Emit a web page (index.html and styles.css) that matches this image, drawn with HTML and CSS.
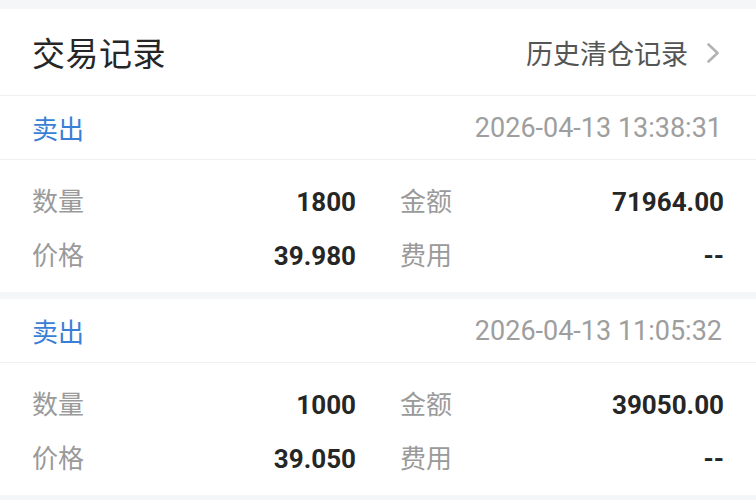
FILE: index.html
```html
<!DOCTYPE html>
<html lang="zh-CN">
<head>
<meta charset="utf-8">
<title>交易记录</title>
<link rel="stylesheet" href="styles.css">
</head>
<body>
<div class="page">
  <header class="head">
    <h1 class="title">交易记录</h1>
    <a class="history">历史清仓记录
      <svg class="chev" width="14" height="20" viewBox="0 0 14 20"><path d="M2.5 1.5 L11.5 10 L2.5 18.5" fill="none" stroke="#b3b3b3" stroke-width="2.6" stroke-linecap="round" stroke-linejoin="round"/></svg>
    </a>
  </header>

  <section class="trade">
    <div class="trade-head">
      <span class="side">卖出</span>
      <span class="time">2026-04-13 13:38:31</span>
    </div>
    <div class="details">
      <div class="cell"><span class="label">数量</span><span class="value">1800</span></div>
      <div class="cell"><span class="label">金额</span><span class="value">71964.00</span></div>
      <div class="cell"><span class="label">价格</span><span class="value">39.980</span></div>
      <div class="cell"><span class="label">费用</span><span class="value">--</span></div>
    </div>
  </section>

  <section class="trade">
    <div class="trade-head">
      <span class="side">卖出</span>
      <span class="time">2026-04-13 11:05:32</span>
    </div>
    <div class="details">
      <div class="cell"><span class="label">数量</span><span class="value">1000</span></div>
      <div class="cell"><span class="label">金额</span><span class="value">39050.00</span></div>
      <div class="cell"><span class="label">价格</span><span class="value">39.050</span></div>
      <div class="cell"><span class="label">费用</span><span class="value">--</span></div>
    </div>
  </section>
</div>
</body>
</html>
```

FILE: styles.css
```css
* { box-sizing: border-box; margin: 0; padding: 0; }

html, body {
  background: #f5f6f8;
  width: 756px;
  height: 500px;
  overflow: hidden;
}

body {
  font-family: Roboto, "Noto Sans CJK SC", sans-serif;
  color: #222;
}

.page {
  padding-top: 9px;
  display: flex;
  flex-direction: column;
  gap: 7px;
}

.head {
  background: #fff;
  height: 87px;
  padding: 0 36px 0 32px;
  display: flex;
  align-items: center;
  justify-content: space-between;
  border-bottom: 1px solid #f0f0f0;
  margin-bottom: -7px;
}

.title {
  font-size: 33px;
  font-weight: 400;
  color: #262626;
  letter-spacing: 0.5px;
}

.history {
  font-size: 27px;
  color: #555;
  display: flex;
  align-items: center;
  gap: 18px;
}

.chev { display: block; margin-top: 1px; }

.trade {
  background: #fff;
}

.trade-head {
  height: 64px;
  padding: 0 34px 0 32px;
  display: flex;
  align-items: center;
  justify-content: space-between;
  border-bottom: 1px solid #f0f0f0;
}

.side {
  font-size: 26px;
  color: #3a7fd6;
}

.time {
  font-size: 27px;
  color: #9e9e9e;
}

.details {
  padding: 13px 32px 11px;
  display: grid;
  grid-template-columns: 1fr 1fr;
  column-gap: 44px;
}

.cell {
  height: 54px;
  padding-top: 8px;
  display: flex;
  align-items: baseline;
  justify-content: space-between;
}

.label {
  font-size: 26px;
  color: #9a9a9a;
}

.value {
  font-size: 26px;
  font-weight: 700;
  color: #262626;
}
```
